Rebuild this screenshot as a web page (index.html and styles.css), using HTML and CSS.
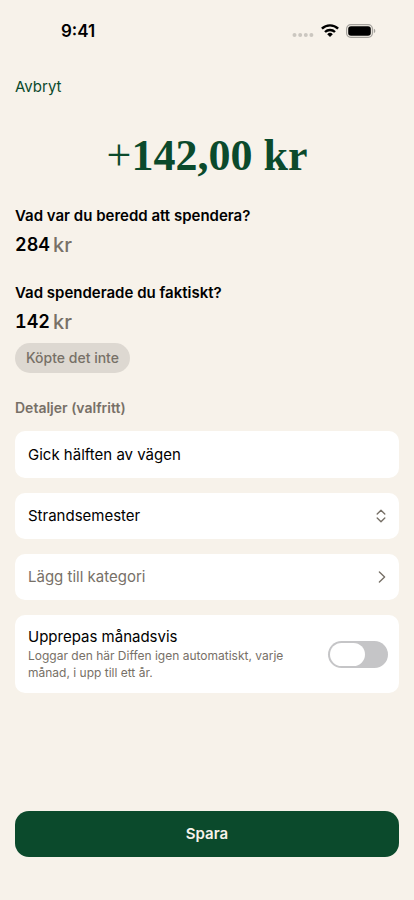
FILE: index.html
```html
<!DOCTYPE html>
<html lang="sv">
<head>
<meta charset="utf-8">
<meta name="viewport" content="width=device-width, initial-scale=1">
<title>Ny Diff</title>
<link rel="stylesheet" href="styles.css">
</head>
<body>
<div class="screen">
  <header class="status">
    <span class="time">9:41</span>
    <div class="indicators">
      <svg class="cellular" width="22" height="4" viewBox="0 0 22 4" fill="#cbc7c0" aria-hidden="true">
        <circle cx="2.5" cy="2" r="2"/><circle cx="8.2" cy="2" r="2"/><circle cx="13.8" cy="2" r="2"/><circle cx="19.4" cy="2" r="2"/>
      </svg>
      <svg width="18" height="14" viewBox="0 0 18 14" fill="none" stroke="#000" stroke-width="2.4" aria-hidden="true">
        <path d="M.9 4.7a11.6 11.6 0 0 1 16.2 0"/>
        <path d="M4 8a7.2 7.2 0 0 1 10 0"/>
        <path d="M9 13 6.2 10.2a4 4 0 0 1 5.6 0Z" fill="#000" stroke="none"/>
      </svg>
      <svg width="30" height="14" viewBox="0 0 30 14" aria-hidden="true">
        <rect x=".6" y=".6" width="25.8" height="12.8" rx="4.2" fill="none" stroke="#a5a29d" stroke-width="1.2"/>
        <rect x="2.2" y="2.2" width="22.6" height="9.6" rx="2.8" fill="#000"/>
        <path d="M27.8 4.8c2 .6 2 3.8 0 4.4Z" fill="#a5a29d"/>
      </svg>
    </div>
  </header>

  <form class="form">
    <button class="cancel" type="button">Avbryt</button>
    <h1 class="total"><span class="sign">+</span>142,00 kr</h1>

    <div class="amounts">
      <div>
        <label class="question" for="planned">Vad var du beredd att spendera?</label>
        <div class="value"><input id="planned" type="text" inputmode="numeric" value="284"><span class="unit">kr</span></div>
      </div>
      <div>
        <label class="question" for="spent">Vad spenderade du faktiskt?</label>
        <div class="value"><input id="spent" type="text" inputmode="numeric" value="142"><span class="unit">kr</span></div>
        <button class="chip" type="button">Köpte det inte</button>
      </div>
    </div>

    <h2 class="section">Detaljer (valfritt)</h2>
    <div class="cards">
      <input class="card note" type="text" value="Gick hälften av vägen" aria-label="Beskrivning">
      <div class="card picker">
        <select aria-label="Mål"><option>Strandsemester</option></select>
        <svg width="10" height="14" viewBox="0 0 10 14" aria-hidden="true"><path d="M1.2 4.9 5 1.3l3.8 3.6M1.2 9.1 5 12.7l3.8-3.6"/></svg>
      </div>
      <button class="card link" type="button">Lägg till kategori
        <svg width="8" height="12" viewBox="0 0 8 12" aria-hidden="true"><path d="m1.4 1 5.2 5-5.2 5"/></svg>
      </button>
      <div class="card repeat">
        <div class="repeat-text">
          <label for="repeat">Upprepas månadsvis</label>
          <p>Loggar den här Diffen igen automatiskt, varje månad, i upp till ett år.</p>
        </div>
        <input class="switch" id="repeat" type="checkbox" role="switch">
      </div>
    </div>
    <button class="save" type="submit">Spara</button>
  </form>
</div>
</body>
</html>
```
FILE: styles.css
```css
* { box-sizing: border-box; }

body {
  margin: 0;
  background: #f7f2ea;
  color: #000;
  font: 15px/20px Inter, "Liberation Sans", sans-serif;
}

button, input, select { font: inherit; color: inherit; }
button, select, input { appearance: none; border: 0; background: none; padding: 0; margin: 0; }
button { cursor: pointer; }

.screen {
  min-height: 100vh;
  display: flex;
  flex-direction: column;
}

.status {
  display: flex;
  justify-content: space-between;
  align-items: center;
  padding: 21px 38px 0 61px;
}

.time { font-size: 17px; font-weight: 600; }

.indicators { display: flex; align-items: center; gap: 7px; }
.cellular { margin-top: 8px; }

.form {
  flex: 1;
  display: flex;
  flex-direction: column;
  align-items: flex-start;
  padding: 36px 15px 43px;
}

.cancel { color: #0b4a2c; }

.total {
  align-self: center;
  margin: 33px 0 24px;
  color: #0b4a2c;
  font: 700 44px/52px "Liberation Serif", serif;
}
.sign { font-weight: 400; }

.amounts { display: flex; flex-direction: column; gap: 23px; }
.question { display: block; font-weight: 600; }

.value { display: flex; align-items: center; gap: 3px; margin-top: 4px; height: 30px; }
.value input { width: 35px; font-size: 18px; font-weight: 600; font-variant-numeric: tabular-nums; }
.unit { color: #777067; font-size: 20px; font-weight: 500; }

.chip {
  display: block;
  height: 30px;
  margin-top: 6px;
  padding: 0 11px;
  border-radius: 15px;
  background: #ddd8d1;
  color: #777067;
  font-size: 14px;
  font-weight: 500;
}

.section { margin: 25px 0 13px; color: #777067; font-size: 14px; font-weight: 600; }

.cards { align-self: stretch; display: flex; flex-direction: column; gap: 15px; }
.card {
  width: 100%;
  min-height: 46px;
  padding: 0 13px;
  border-radius: 10px;
  background: #fff;
}
.note { height: 47px; }
.card path { fill: none; stroke: #777067; stroke-width: 1.4; stroke-linecap: round; stroke-linejoin: round; }

.picker, .link, .repeat { display: flex; align-items: center; justify-content: space-between; }
.picker select { flex: 1; }
.link { color: #777067; }

.repeat { padding: 12px 11px 12px 13px; gap: 16px; }
.repeat-text { flex: 1; max-width: 276px; }
.repeat label { display: block; }
.repeat p { margin: 0; color: #777067; font-size: 12px; line-height: 17px; }
.switch {
  flex: none;
  width: 60px;
  height: 27px;
  padding: 2px;
  border-radius: 14px;
  background: #c5c5c7;
}
.switch::before {
  content: "";
  display: block;
  width: 35px;
  height: 23px;
  border-radius: 12px;
  background: #fff;
}
.switch:checked { background: #0b4a2c; }
.switch:checked::before { margin-left: auto; }

.save {
  align-self: stretch;
  height: 46px;
  margin-top: auto;
  border-radius: 14px;
  background: #0b4a2c;
  color: #f7f2ea;
  font-weight: 600;
}
```
